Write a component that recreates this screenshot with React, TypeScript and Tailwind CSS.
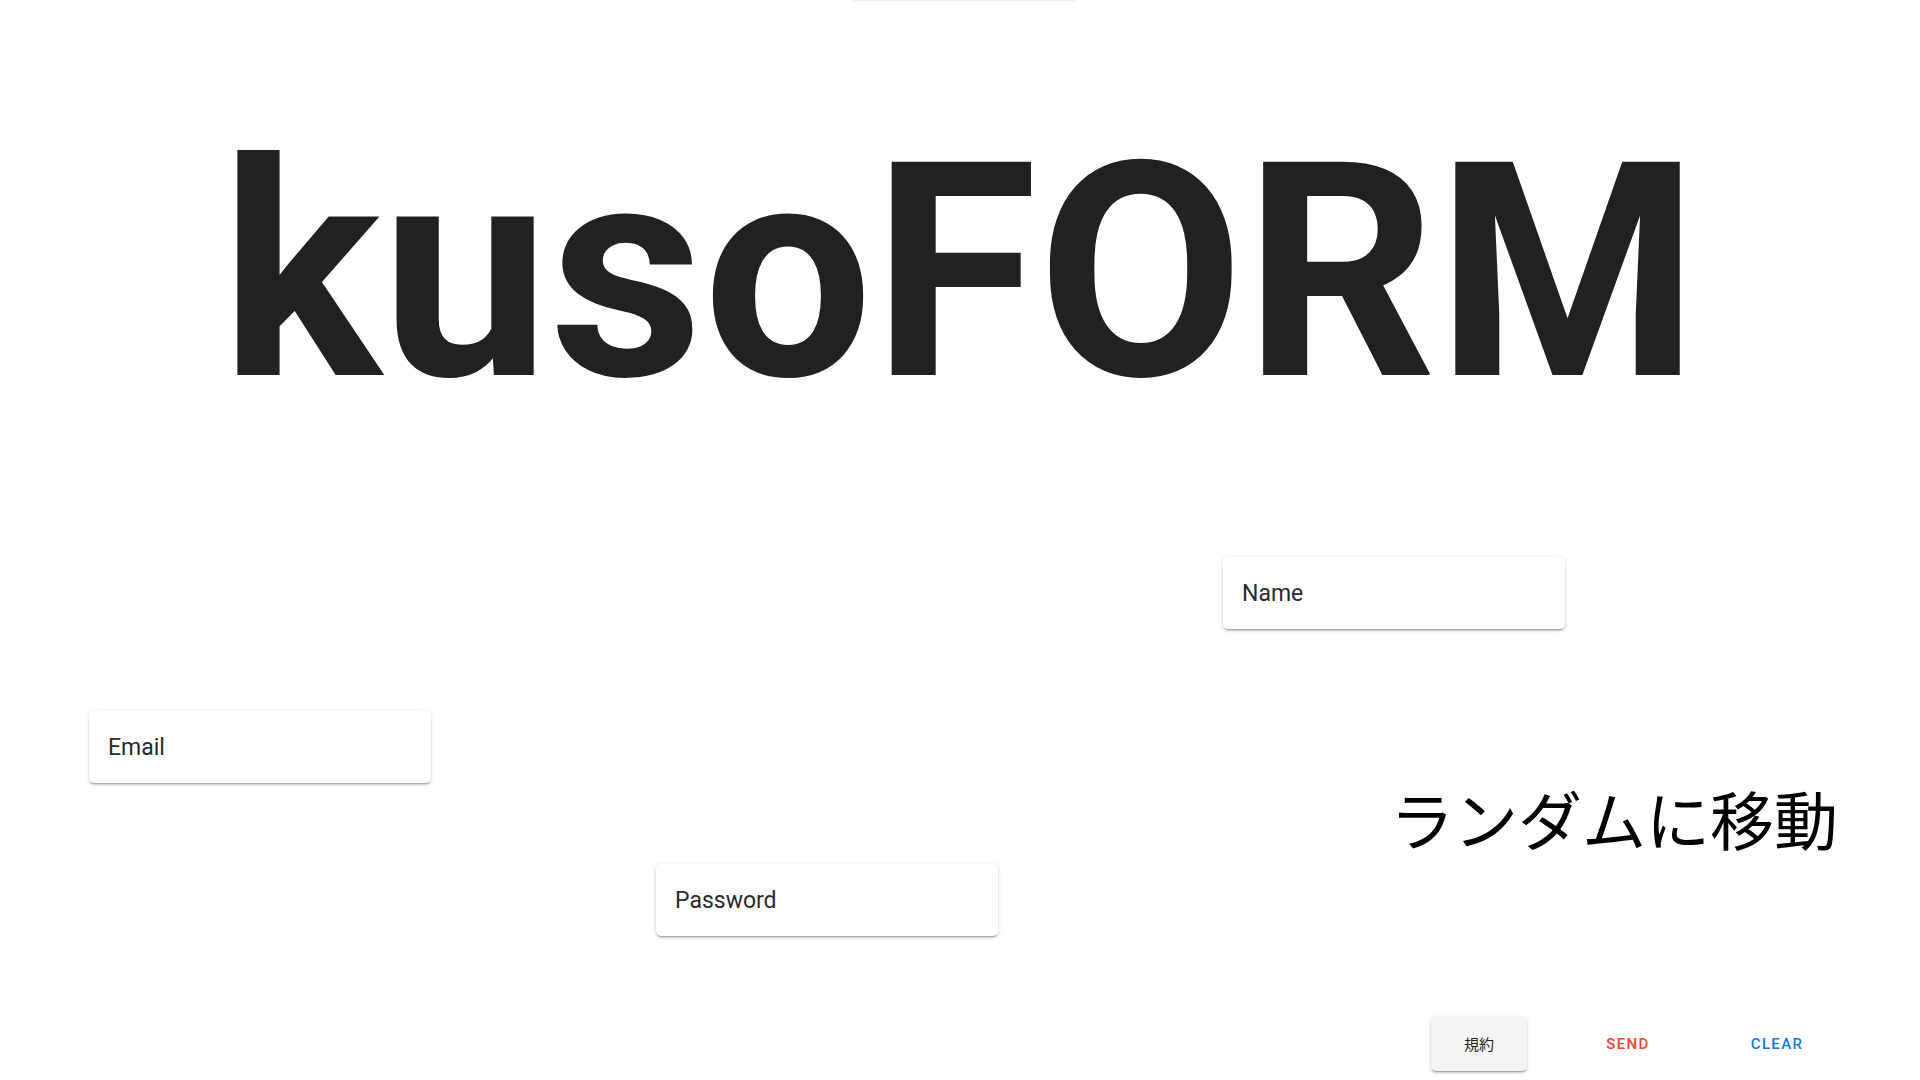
import React from "react";

const elev =
  "shadow-[0_3px_1px_-2px_rgba(0,0,0,0.2),0_2px_2px_0_rgba(0,0,0,0.14),0_1px_5px_0_rgba(0,0,0,0.12)]";

function Field({ label, className }: { label: string; className: string }) {
  return (
    <div
      className={
        "absolute w-[342px] h-[72px] bg-white rounded-[5px] flex items-center px-[19px] " +
        elev +
        " " +
        className
      }
    >
      <span className="text-[23px] text-[#2a2a2a] font-['Roboto',sans-serif] leading-none">{label}</span>
    </div>
  );
}

export default function App() {
  return (
    <div className="relative w-[1920px] h-[1080px] overflow-hidden bg-white font-['Roboto',sans-serif]">
      <div
        className={
          "absolute left-[851px] top-[-58px] w-[226px] h-[56px] rounded-[4px] bg-white " + elev
        }
      />
      <div className="flex flex-col h-full">
        <h1 className="pt-[123px] text-center text-[300px] leading-[300px] font-bold text-[#212121] font-['Roboto',sans-serif] tracking-normal">
          kusoFORM
        </h1>
        <div className="relative flex-1">
          <Field label="Name" className="left-[1223px] top-[134px]" />
          <Field label="Email" className="left-[89px] top-[288px]" />
          <Field label="Password" className="left-[656px] top-[441px]" />
          <div className="absolute left-[1390px] top-[362px] text-[64px] leading-none text-black font-['Noto_Sans_CJK_JP',sans-serif]">
            ランダムに移動
          </div>
        </div>
        <div className="flex justify-end items-center gap-[53px] pr-[95px] pb-[9px]">
          <button className={"w-[96px] h-[54px] rounded-[5px] bg-[#f5f5f5] text-[15px] text-[#212121] font-['Noto_Sans_CJK_JP',sans-serif] " + elev}>
            規約
          </button>
          <button className="w-[96px] h-[54px] rounded-[5px] text-[15px] font-medium tracking-[0.09em] text-[#f44336] font-['Roboto',sans-serif]">
            SEND
          </button>
          <button className="w-[96px] h-[54px] rounded-[5px] text-[15px] font-medium tracking-[0.09em] text-[#1976d2] font-['Roboto',sans-serif]">
            CLEAR
          </button>
        </div>
      </div>
    </div>
  );
}
